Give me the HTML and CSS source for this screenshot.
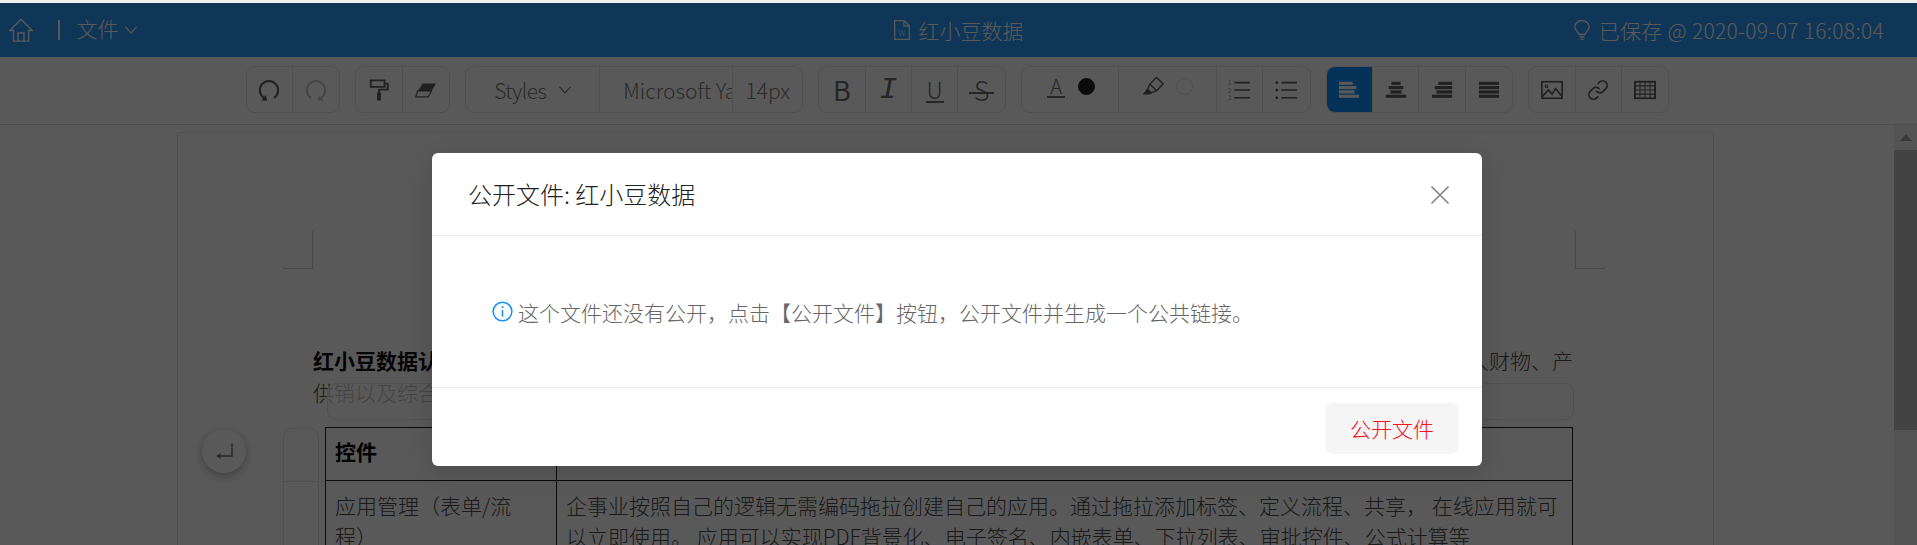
FILE: index.html
```html
<!DOCTYPE html>
<html lang="zh-CN">
  <head>
    <meta charset="UTF-8" />
    <meta name="viewport" content="width=device-width, initial-scale=1.0" />
    <title>红小豆数据</title>
    <link rel="stylesheet" href="styles.css">
  </head>
  <body>
    <div class="top-strip"></div>
    <div class="app">
      <header class="app-header">
        <div class="header-left">
          <svg class="home-icon" viewBox="0 0 24 24" fill="none" stroke="currentColor" stroke-width="1.4">
            <path d="M0.8 12.5 12 1.2l11.2 11.3h-3.6v10.6H4.4V12.5z" />
            <path d="M9 23v-8h6v8" />
          </svg>
          <span class="header-sep"></span>
          <span class="file-menu">文件</span>
          <svg class="chevron" viewBox="0 0 12 8" fill="none" stroke="currentColor" stroke-width="1.2">
            <path d="M0.5 0.8 6 7l5.5-6.2" />
          </svg>
        </div>
        <div class="header-title">
          <svg class="doc-icon" viewBox="0 0 16 20" fill="none" stroke="currentColor" stroke-width="1.3">
            <path d="M0.7 0.7h9.6l5 5v13.6H0.7z" />
            <path d="M10 0.7v5.4h5.3" />
            <text x="8" y="16" text-anchor="middle" class="doc-w">W</text>
          </svg>
          <span>红小豆数据</span>
        </div>
        <div class="header-right">
          <svg class="bulb-icon" viewBox="0 0 16 20" fill="none" stroke="currentColor" stroke-width="1.3">
            <path d="M5 14.5C5 12 .8 10.5 .8 6.8a7.2 6.2 0 0 1 14.4 0C15.2 10.5 11 12 11 14.5z" />
            <path d="M5.5 17h5M6.5 19.3h3" />
          </svg>
          <span class="save-status">已保存 @ 2020-09-07 16:08:04</span>
        </div>
      </header>

      <div class="toolbar">
        <div class="tool-group">
          <button class="tool-btn">
            <svg class="icon" viewBox="0 0 24 24" fill="none" stroke="currentColor" stroke-width="2.2">
              <path d="M6.5 20.5a10 10 0 1 1 11 0" />
              <path d="M3.5 23.5H10l-1.5-6z" fill="currentColor" stroke="none" />
            </svg>
          </button>
          <button class="tool-btn tool-off">
            <svg class="icon" viewBox="0 0 24 24" fill="none" stroke="currentColor" stroke-width="2.2">
              <path d="M17.5 20.5a10 10 0 1 0-11 0" />
              <path d="M20.5 23.5H14l1.5-6z" fill="currentColor" stroke="none" />
            </svg>
          </button>
        </div>
        <div class="tool-group">
          <button class="tool-btn">
            <svg class="icon" viewBox="0 0 24 24" fill="none" stroke="currentColor" stroke-width="2">
              <path d="M3 1.5h15v7H3z" />
              <path d="M18 5h3.5v6.5H12V15" />
              <path d="M10.5 15h3v8h-3z" fill="currentColor" stroke-width="1" />
            </svg>
          </button>
          <button class="tool-btn">
            <svg class="icon" viewBox="0 0 24 24">
              <path d="M8.5 5H23l-5 8H3z" fill="currentColor" />
              <path d="M3 13h15l-3.5 6.5H0.8z" fill="none" stroke="currentColor" stroke-width="1.3" />
            </svg>
          </button>
        </div>
        <div class="tool-group">
          <button class="tool-btn tool-styles">
            <span class="styles-label">Styles</span>
            <svg class="chevron" viewBox="0 0 12 8" fill="none" stroke="currentColor" stroke-width="1.2">
              <path d="M0.5 0.8 6 7l5.5-6.2" />
            </svg>
          </button>
          <button class="tool-btn tool-font"><span>Microsoft Ya</span></button>
          <button class="tool-btn tool-size">14px</button>
        </div>
        <div class="tool-group">
          <button class="tool-btn tool-letter tool-bold">B</button>
          <button class="tool-btn tool-letter tool-italic">I</button>
          <button class="tool-btn tool-letter"><span class="letter-under">U</span></button>
          <button class="tool-btn tool-letter"><span class="letter-strike">S</span></button>
        </div>
        <div class="tool-group">
          <button class="tool-btn tool-color tool-text-color">
            <span class="color-letter">A</span>
            <span class="color-dot color-dot-black"></span>
          </button>
          <button class="tool-btn tool-color tool-marker">
            <svg class="icon icon-marker" viewBox="0 0 24 24" fill="none" stroke="currentColor" stroke-width="1.5">
              <path d="M14.5 1.5 22 8.5l-7 7.5-7.5-7z" />
              <path d="M7.5 9 5 14.5l4 4 5.5-2.5" />
              <path d="M4.5 15 1 19.5h6.5l1.5-1.5z" fill="currentColor" />
            </svg>
            <span class="color-dot"></span>
          </button>
          <button class="tool-btn">
            <svg class="icon" viewBox="0 0 24 24" fill="none" stroke="currentColor" stroke-width="1.8">
              <text x="0" y="7" class="list-num">1</text>
              <text x="0" y="15" class="list-num">2</text>
              <text x="0" y="23" class="list-num">3</text>
              <path d="M7 4h17M7 12h17M7 20.5h17" />
            </svg>
          </button>
          <button class="tool-btn">
            <svg class="icon" viewBox="0 0 24 24" fill="none" stroke="currentColor" stroke-width="1.8">
              <circle cx="2" cy="4" r="1.5" fill="currentColor" stroke="none" />
              <circle cx="2" cy="12" r="1.5" fill="currentColor" stroke="none" />
              <circle cx="2" cy="20.5" r="1.5" fill="currentColor" stroke="none" />
              <path d="M7 4h17M7 12h17M7 20.5h17" />
            </svg>
          </button>
        </div>
        <div class="tool-group">
          <button class="tool-btn tool-active">
            <svg class="icon" viewBox="0 0 24 18" fill="currentColor">
              <rect x="1" y="0" width="15" height="3.4" />
              <rect x="1" y="4.7" width="19" height="3.4" />
              <rect x="1" y="9.4" width="17" height="3.4" />
              <rect x="1" y="14.1" width="22" height="3.4" />
            </svg>
          </button>
          <button class="tool-btn">
            <svg class="icon" viewBox="0 0 24 18" fill="currentColor">
              <rect x="7" y="0" width="10" height="3.4" />
              <rect x="4" y="4.7" width="16" height="3.4" />
              <rect x="6" y="9.4" width="12" height="3.4" />
              <rect x="1" y="14.1" width="22" height="3.4" />
            </svg>
          </button>
          <button class="tool-btn">
            <svg class="icon" viewBox="0 0 24 18" fill="currentColor">
              <rect x="8" y="0" width="15" height="3.4" />
              <rect x="4" y="4.7" width="19" height="3.4" />
              <rect x="6" y="9.4" width="17" height="3.4" />
              <rect x="1" y="14.1" width="22" height="3.4" />
            </svg>
          </button>
          <button class="tool-btn">
            <svg class="icon" viewBox="0 0 24 18" fill="currentColor">
              <rect x="1" y="0" width="22" height="3.4" />
              <rect x="1" y="4.7" width="22" height="3.4" />
              <rect x="1" y="9.4" width="22" height="3.4" />
              <rect x="1" y="14.1" width="22" height="3.4" />
            </svg>
          </button>
        </div>
        <div class="tool-group">
          <button class="tool-btn">
            <svg class="icon" viewBox="0 0 24 20" fill="none" stroke="currentColor" stroke-width="1.8">
              <rect x="1" y="1" width="22" height="18" />
              <circle cx="6" cy="6" r="1.5" stroke-width="1.2" />
              <path d="M1.5 17 8 10l4 4.5 4-6 7 8.5" />
            </svg>
          </button>
          <button class="tool-btn">
            <svg class="icon" viewBox="0 0 24 24" fill="none" stroke="currentColor" stroke-width="1.9">
              <path d="M10 13a5 5 0 0 0 7.54.54l3-3a5 5 0 0 0-7.07-7.07l-1.72 1.71" />
              <path d="M14 11a5 5 0 0 0-7.54-.54l-3 3a5 5 0 0 0 7.07 7.07l1.71-1.71" />
            </svg>
          </button>
          <button class="tool-btn">
            <svg class="icon" viewBox="0 0 24 20" fill="none" stroke="currentColor" stroke-width="1.1">
              <rect x="1" y="1" width="22" height="18" stroke-width="2" />
              <path d="M1 5.5h22M1 10h22M1 14.5h22M6.5 1v18M12 1v18M17.5 1v18" />
            </svg>
          </button>
        </div>
      </div>

      <div class="doc-area">
        <div class="doc-scroll">
          <div class="doc-page">
            <div class="crop-marks">
              <span class="crop-mark crop-left"></span>
              <span class="crop-mark crop-right"></span>
            </div>
            <p class="doc-text">
              <b>红小豆数据认为</b>企业需要一个统一的数字化平台，把分散在各处的业务数据集中起来，覆盖企业日常运营中的全部流程，包括人财物、产供销以及综合管理。
            </p>
            <table class="doc-table">
              <tr class="head-row">
                <th class="col-name">控件</th>
                <th></th>
              </tr>
              <tr>
                <td>应用管理（表单/流程）</td>
                <td>企事业按照自己的逻辑无需编码拖拉创建自己的应用。通过拖拉添加标签、定义流程、共享， 在线应用就可以立即使用。 应用可以实现PDF背景化、电子签名、内嵌表单、下拉列表、审批控件、公式计算等</td>
              </tr>
            </table>
            <div class="column-handle"></div>
            <div class="row-handle"></div>
            <div class="return-btn">
              <svg viewBox="0 0 18 16" fill="none" stroke="currentColor" stroke-width="1.5">
                <path d="M17 0.5V13H2" />
                <path d="M5.5 10 1.5 13l4 3z" fill="currentColor" stroke="none" />
              </svg>
            </div>
          </div>
        </div>
        <div class="scrollbar">
          <div class="scroll-up"><span class="scroll-arrow"></span></div>
          <div class="scroll-thumb"></div>
        </div>
      </div>

      <div class="mask">
        <div class="modal">
          <div class="modal-header">
            <span>公开文件: 红小豆数据</span>
            <svg class="modal-close" viewBox="0 0 18 18" fill="none" stroke="currentColor" stroke-width="1.6">
              <path d="M0.5 0.5l17 17M17.5 0.5l-17 17" />
            </svg>
          </div>
          <div class="modal-body">
            <svg class="info-icon" viewBox="0 0 22 22" fill="none" stroke="currentColor" stroke-width="1.6">
              <circle cx="11" cy="11" r="9.8" />
              <path d="M11 9.5v7" />
              <path d="M11 5.5v1.8" stroke-width="2" />
            </svg>
            <span>这个文件还没有公开，点击【公开文件】按钮，公开文件并生成一个公共链接。</span>
          </div>
          <div class="modal-footer">
            <button class="publish-btn">公开文件</button>
          </div>
        </div>
      </div>
    </div>
  </body>
</html>
```

FILE: styles.css
```css
:root {
  --primary-color: #2b97f9;
  --active-color: #0d90ff;
  --border-color: #e4e4e4;
  --icon-color: #5c5c5c;
  --font-family: "Noto Sans CJK SC", "Noto Sans", sans-serif;
}

* {
  margin: 0;
  padding: 0;
  box-sizing: border-box;
}

html,
body {
  height: 545px;
  overflow: hidden;
}

body {
  font-family: var(--font-family);
  font-size: 21px;
  font-weight: 300;
  text-spacing-trim: space-all;
  color: #666;
  background-color: white;
}

.top-strip {
  height: 3px;
  background-color: #eef0f2;
}

.app {
  position: relative;
  height: 542px;
  display: flex;
  flex-direction: column;
  overflow: hidden;
}

/* header */
.app-header {
  flex: none;
  height: 54px;
  display: grid;
  grid-template-columns: 1fr auto 1fr;
  align-items: center;
  padding: 0 9px;
  background-color: var(--primary-color);
  color: white;
}

.header-left,
.header-title,
.header-right {
  display: flex;
  align-items: center;
}

.header-right {
  justify-content: flex-end;
  padding-right: 24px;
}

.save-status {
  letter-spacing: 0.3px;
}

.home-icon {
  width: 24px;
  height: 24px;
}

.header-sep {
  width: 1.5px;
  height: 20px;
  margin: 0 17px 0 25px;
  background-color: white;
}

.file-menu {
  margin: 0 6px 4px 0;
}

.chevron {
  width: 12px;
  height: 8px;
}

.doc-icon {
  width: 16px;
  height: 20px;
  margin-right: 9px;
}

.doc-w {
  font-family: var(--font-family);
  font-size: 8px;
  fill: white;
  stroke: none;
}

.bulb-icon {
  width: 16px;
  height: 20px;
  margin-right: 9px;
}

/* toolbar */
.toolbar {
  flex: none;
  height: 68px;
  display: flex;
  justify-content: center;
  align-items: flex-start;
  gap: 15px;
  padding: 9px 2px 0 0;
  background-color: white;
  border-bottom: 1px solid #dcdcdc;
}

.tool-group {
  display: flex;
  height: 47px;
  border: 1px solid var(--border-color);
  border-radius: 9px;
  overflow: hidden;
}

.tool-btn {
  position: relative;
  width: 46.4px;
  height: 100%;
  display: flex;
  align-items: center;
  justify-content: center;
  flex: none;
  font-family: var(--font-family);
  font-size: 21px;
  font-weight: 300;
  color: #7a7a7a;
  background: none;
  border: none;
  border-right: 1px solid var(--border-color);
}

.tool-btn:last-child {
  border-right: none;
}

.tool-off {
  color: #c0c0c0;
}

.icon {
  width: 22px;
  height: 22px;
  color: var(--icon-color);
}

.tool-off .icon {
  color: #c4c4c4;
}

.tool-styles {
  width: 134px;
  gap: 13px;
}

.styles-label {
  letter-spacing: -0.6px;
}

.tool-font {
  width: 133px;
  justify-content: flex-start;
  padding-left: 23px;
  overflow: hidden;
  white-space: nowrap;
}

.tool-size {
  width: 69px;
}

.tool-letter {
  font-size: 27px;
  color: #6e6e6e;
  line-height: 1;
}

.tool-bold {
  font-weight: 400;
}

.tool-italic {
  font-family: "Liberation Mono", monospace;
  font-style: italic;
  font-size: 30px;
}

.letter-under {
  width: 18px;
  font-size: 23px;
  line-height: 24px;
  text-align: center;
  border-bottom: 2px solid #6e6e6e;
}

.letter-strike {
  position: relative;
  line-height: 24px;
}

.letter-strike::after {
  content: "";
  position: absolute;
  left: -5px;
  right: -5px;
  top: 14px;
  height: 2px;
  background-color: #6e6e6e;
}

.tool-color {
  width: 97.5px;
  gap: 15px;
  padding-bottom: 6px;
}

.tool-text-color {
  gap: 13px;
  padding-left: 2px;
}

.tool-marker {
  gap: 18px;
}

.color-letter {
  width: 18px;
  font-size: 20px;
  line-height: 21px;
  text-align: center;
  color: #6e6e6e;
  border-bottom: 2px solid #6e6e6e;
}

.color-dot {
  width: 17px;
  height: 17px;
  border: 1px solid #e0e0e0;
  border-radius: 50%;
}

.color-dot-black {
  background-color: #222;
  border-color: #222;
}

.icon-marker {
  margin-right: -7px;
}

.list-num {
  font-family: var(--font-family);
  font-size: 7px;
  fill: currentColor;
  stroke: none;
}

.tool-active {
  background-color: var(--active-color);
}

.tool-active .icon {
  color: #fff;
}

/* document */
.doc-area {
  flex: 1;
  min-height: 0;
  display: flex;
  background-color: white;
}

.doc-scroll {
  flex: 1;
  padding: 7px 0 0 177px;
  overflow: hidden;
}

.doc-page {
  position: relative;
  width: 1537px;
  height: 600px;
  padding: 98px 140px 0 135px;
  border: 1px solid var(--border-color);
  border-bottom: none;
  color: #4a4a4a;
}

.crop-marks {
  display: flex;
  justify-content: space-between;
  margin: 0 -32px 0 -30px;
}

.crop-mark {
  width: 30px;
  height: 38px;
  border-bottom: 1px solid #cfcfcf;
}

.crop-left {
  border-right: 1px solid #cfcfcf;
}

.crop-right {
  border-left: 1px solid #cfcfcf;
}

.doc-text {
  margin-top: 76px;
  line-height: 31.5px;
}

.doc-text b {
  font-weight: 700;
  color: #111;
}

.doc-table {
  width: 1248px;
  margin: 19px 0 0 12px;
  border-collapse: collapse;
  table-layout: fixed;
  line-height: 31px;
}

.doc-table th,
.doc-table td {
  border: 1px solid #222;
  padding: 9px 9px 0;
  text-align: left;
  vertical-align: top;
}

.head-row {
  height: 53px;
}

.doc-table th {
  padding: 0 9px 6px;
  vertical-align: middle;
  font-weight: 700;
  color: black;
}

.col-name {
  width: 231px;
}

.column-handle {
  position: absolute;
  left: 149px;
  top: 250px;
  width: 1247px;
  height: 37px;
  background-color: rgba(255, 255, 255, 0.65);
  border: 1px solid var(--border-color);
  border-radius: 9px;
}

.row-handle {
  position: absolute;
  left: 105px;
  top: 295px;
  width: 36px;
  height: 140px;
  border: 1px solid var(--border-color);
  border-radius: 9px 9px 0 0;
  background: linear-gradient(transparent 52px, var(--border-color) 52px, var(--border-color) 53px, transparent 53px);
}

.return-btn {
  position: absolute;
  left: 24px;
  top: 296px;
  width: 44px;
  height: 44px;
  display: flex;
  align-items: center;
  justify-content: center;
  background-color: white;
  border-radius: 50%;
  box-shadow: 0 3px 10px rgba(0, 0, 0, 0.3);
  color: #777;
}

.return-btn svg {
  width: 18px;
  height: 16px;
}

/* scrollbar */
.scrollbar {
  flex: none;
  width: 23px;
  background-color: #f1f1f1;
}

.scroll-up {
  height: 25px;
  display: flex;
  align-items: center;
  justify-content: center;
}

.scroll-arrow {
  width: 0;
  height: 0;
  border-left: 6px solid transparent;
  border-right: 6px solid transparent;
  border-bottom: 7px solid #a3a3a3;
}

.scroll-thumb {
  height: 280px;
  background-color: #c1c1c1;
}

/* modal */
.mask {
  position: absolute;
  inset: 0;
  background-color: rgba(0, 0, 0, 0.65);
}

.modal {
  position: absolute;
  left: 432px;
  top: 150px;
  width: 1050px;
  height: 313px;
  display: flex;
  flex-direction: column;
  background-color: white;
  border-radius: 6px;
  box-shadow: 0 6px 24px rgba(0, 0, 0, 0.15);
}

.modal-header {
  height: 83px;
  flex: none;
  display: flex;
  align-items: center;
  justify-content: space-between;
  padding: 0 33px 2px 36px;
  font-size: 24px;
  color: #222;
  border-bottom: 1px solid #e8e8e8;
}

.modal-close {
  width: 18px;
  height: 18px;
  margin-top: 4px;
  color: #8c8c8c;
}

.modal-body {
  flex: 1;
  display: flex;
  align-items: center;
  gap: 5px;
  padding: 0 60px;
}

.info-icon {
  width: 21px;
  height: 21px;
  flex: none;
  color: #1890ff;
}

.modal-footer {
  flex: none;
  height: 79px;
  display: flex;
  justify-content: flex-end;
  padding: 15px 24px 0 0;
  border-top: 1px solid #e8e8e8;
}

.publish-btn {
  width: 132px;
  height: 51px;
  padding-bottom: 2px;
  font-family: var(--font-family);
  font-size: 21px;
  font-weight: 300;
  color: #f5101f;
  background-color: #f5f5f5;
  border: none;
  border-radius: 6px;
}
```
